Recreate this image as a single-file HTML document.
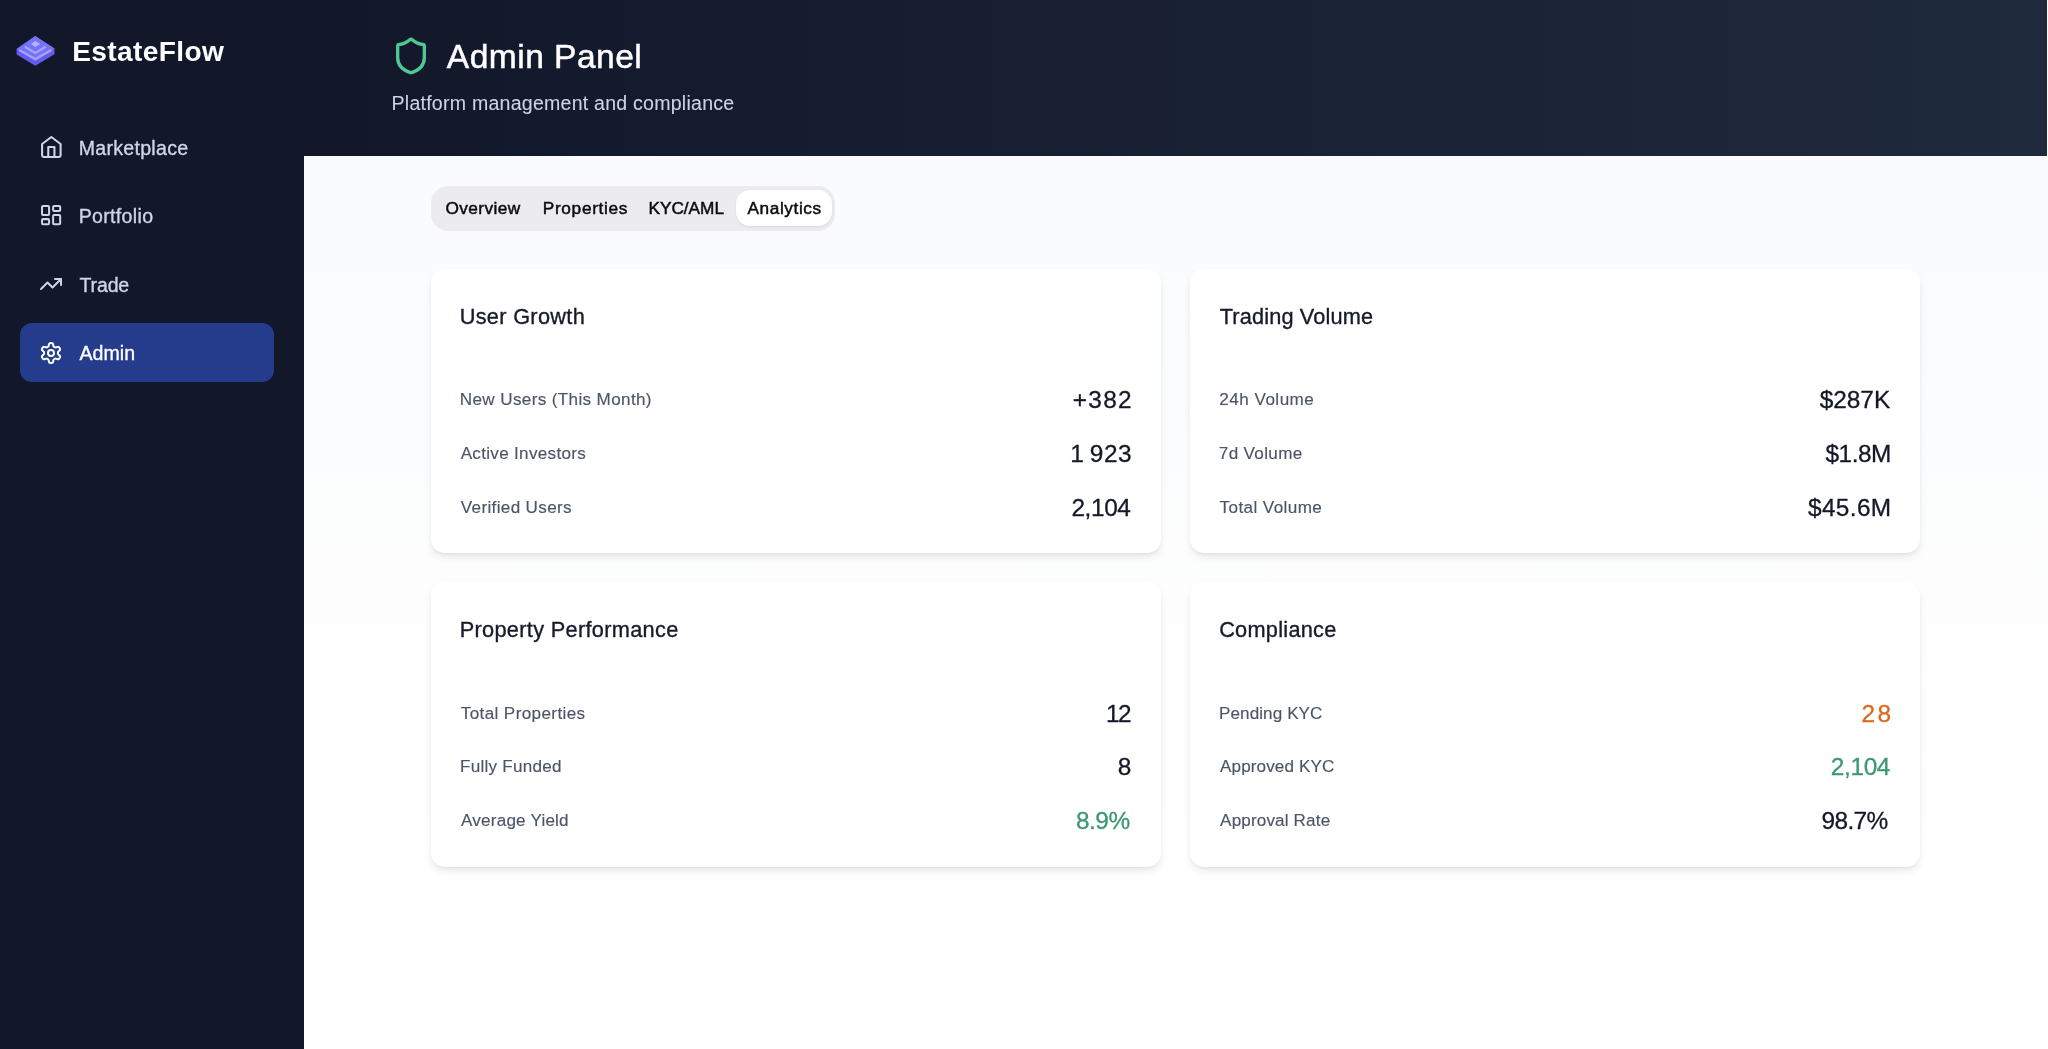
<!DOCTYPE html>
<html lang="en"><head><meta charset="utf-8"><title>EstateFlow Admin Panel</title>
<style>
html,body{margin:0;padding:0}
body{width:2048px;height:1049px;overflow:hidden;position:relative;background:#fff;font-family:"Liberation Sans", Arial, sans-serif;}
h1,h3,p,button{margin:0;padding:0;border:0;background:none;font:inherit;font-weight:400}
.t{position:absolute;line-height:1;white-space:pre;display:block}
.ic{position:absolute;color:#ced5e8;overflow:visible}
#bg div{position:absolute}
#ui{position:absolute;left:0;top:0;width:2048px;height:1049px;will-change:transform}
#side-bg{left:0;top:0;width:303.5px;height:1049px;background:#12172a}
#head-bg{left:303.5px;top:0;width:1743.5px;height:156.3px;background:linear-gradient(90deg,#12172a 0%,#1f2a3c 100%)}
#main-bg{left:303.5px;top:156px;width:1744.5px;height:893px;background:linear-gradient(180deg,#fafbfd 0px,#fbfcfd 250px,#fefefe 540px,#fff 680px)}
#nav-on{left:20.2px;top:323.1px;width:254.2px;height:59.4px;border-radius:12px;background:#243c8b}
#tabs-bg{left:431px;top:185.5px;width:404px;height:45px;border-radius:17px;background:#ececef}
#tab-on{left:735.6px;top:190px;width:96.4px;height:35.6px;border-radius:14px;background:#fff;box-shadow:0 1px 2.5px rgba(0,0,0,.07)}
.card{width:730.3px;height:284.4px;border-radius:14px;background:#fff;box-shadow:0 5px 8px -1.5px rgba(0,0,0,.085),0 2px 4.5px -2px rgba(0,0,0,.09)}
</style></head><body>
<div id="bg">
<div id="main-bg"></div>
<div id="side-bg"></div>
<div id="head-bg"></div>
<div id="nav-on"></div>
<div id="tabs-bg"></div>
<div id="tab-on"></div>
<div class="card" style="left:431px;top:268.8px"></div>
<div class="card" style="left:1189.7px;top:268.8px"></div>
<div class="card" style="left:431px;top:582.2px"></div>
<div class="card" style="left:1189.7px;top:582.2px"></div>
</div>
<div id="ui">
<aside>
<svg class="ic" style="left:14px;top:33px" width="44" height="36" viewBox="14 33 44 36">
<polygon points="16.6,48.9 35.2,36.1 54.5,48.4 54.5,54.2 35.3,65.8 16.6,54.6" fill="#655cec"/>
<polygon points="16.6,48.9 35.2,36.1 54.5,48.4 35.3,61.6" fill="#7672f5"/>
<polyline points="20.0,50.5 35.3,59.0 50.6,50.5" fill="none" stroke="#a3a4ff" stroke-width="2.3" stroke-linejoin="round" stroke-linecap="round"/>
<polyline points="25.6,47.3 35.3,53.0 45.0,47.3" fill="none" stroke="#a3a4ff" stroke-width="2.3" stroke-linejoin="round" stroke-linecap="round"/>
<polygon points="35.4,40.9 40.2,43.9 35.4,46.9 30.9,43.9" fill="#b3b4ff"/>
</svg>
<div class="t brand" style="left:72.20px;top:38.00px;font-size:28.12px;color:#ffffff;font-weight:700;letter-spacing:0.367px;">EstateFlow</div>
<nav>
<a class="nav"><svg class="ic" style="left:39.00px;top:134.55px" width="24.7" height="24.0" viewBox="0 0 24 24" preserveAspectRatio="none" fill="none" stroke="currentColor" stroke-width="2" stroke-linecap="round" stroke-linejoin="round"><path d="m3 9 9-7 9 7v11a2 2 0 0 1-2 2H5a2 2 0 0 1-2-2z"/><polyline points="9 22 9 12 15 12 15 22"/></svg><span class="t" style="left:78.67px;top:138.63px;font-size:19.57px;color:#ced5e8;letter-spacing:0.29px;-webkit-text-stroke:0.35px #ced5e8;">Marketplace</span></a>
<a class="nav"><svg class="ic" style="left:39.35px;top:203.10px" width="24.2" height="24.2" viewBox="0 0 24 24" fill="none" stroke="currentColor" stroke-width="2" stroke-linecap="round" stroke-linejoin="round"><rect width="7" height="9" x="3" y="3" rx="1"/><rect width="7" height="5" x="14" y="3" rx="1"/><rect width="7" height="9" x="14" y="12" rx="1"/><rect width="7" height="5" x="3" y="16" rx="1"/></svg><span class="t" style="left:78.67px;top:207.23px;font-size:19.57px;color:#ced5e8;letter-spacing:0.331px;-webkit-text-stroke:0.35px #ced5e8;">Portfolio</span></a>
<a class="nav"><svg class="ic" style="left:39.45px;top:271.90px" width="24.0" height="24.0" viewBox="0 0 24 24" fill="none" stroke="currentColor" stroke-width="2" stroke-linecap="round" stroke-linejoin="round"><polyline points="22 7 13.5 15.5 8.5 10.5 2 17"/><polyline points="16 7 22 7 22 13"/></svg><span class="t" style="left:79.58px;top:275.73px;font-size:19.57px;color:#ced5e8;letter-spacing:-0.188px;-webkit-text-stroke:0.35px #ced5e8;">Trade</span></a>
<a class="nav on"><svg class="ic" style="left:39.30px;top:340.50px;color:#fff" width="24.0" height="24.0" viewBox="0 0 24 24" fill="none" stroke="currentColor" stroke-width="2" stroke-linecap="round" stroke-linejoin="round"><path d="M12.22 2h-.44a2 2 0 0 0-2 2v.18a2 2 0 0 1-1 1.73l-.43.25a2 2 0 0 1-2 0l-.15-.08a2 2 0 0 0-2.73.73l-.22.38a2 2 0 0 0 .73 2.73l.15.1a2 2 0 0 1 1 1.72v.51a2 2 0 0 1-1 1.74l-.15.09a2 2 0 0 0-.73 2.73l.22.38a2 2 0 0 0 2.73.73l.15-.08a2 2 0 0 1 2 0l.43.25a2 2 0 0 1 1 1.73V20a2 2 0 0 0 2 2h.44a2 2 0 0 0 2-2v-.18a2 2 0 0 1 1-1.73l.43-.25a2 2 0 0 1 2 0l.15.08a2 2 0 0 0 2.73-.73l.22-.39a2 2 0 0 0-.73-2.73l-.15-.08a2 2 0 0 1-1-1.74v-.5a2 2 0 0 1 1-1.74l.15-.09a2 2 0 0 0 .73-2.73l-.22-.38a2 2 0 0 0-2.73-.73l-.15.08a2 2 0 0 1-2 0l-.43-.25a2 2 0 0 1-1-1.73V4a2 2 0 0 0-2-2z"/><circle cx="12" cy="12" r="3"/></svg><span class="t" style="left:79.38px;top:344.13px;font-size:19.57px;color:#ffffff;letter-spacing:0.05px;-webkit-text-stroke:0.35px #ffffff;">Admin</span></a>
</nav>
</aside>
<header>
<svg class="ic" style="left:391.30px;top:36.00px;color:#4ec995" width="40" height="40" viewBox="0 0 24 24" fill="none" stroke="currentColor" stroke-width="2" stroke-linecap="round" stroke-linejoin="round"><path d="M20 13c0 5-3.5 7.5-7.66 8.95a1 1 0 0 1-.67-.01C7.5 20.5 4 18 4 13V6a1 1 0 0 1 1-1c2 0 4.5-1.2 6.24-2.72a1.17 1.17 0 0 1 1.52 0C14.51 3.81 17 5 19 5a1 1 0 0 1 1 1z"/></svg>
<h1 class="t" style="left:446.85px;top:40.40px;font-size:33.55px;color:#ffffff;letter-spacing:0.47px;-webkit-text-stroke:0.5px #ffffff;">Admin Panel</h1>
<p class="t" style="left:391.55px;top:94.43px;font-size:19.57px;color:#cbd5e1;letter-spacing:0.233px;-webkit-text-stroke:0.1px #cbd5e1;">Platform management and compliance</p>
</header>
<main>
<div role="tablist">
<button class="t tab" style="left:445.39px;top:200.29px;font-size:17.26px;color:#0b0b10;letter-spacing:0.41px;-webkit-text-stroke:0.48px #0b0b10;">Overview</button>
<button class="t tab" style="left:542.74px;top:200.29px;font-size:17.26px;color:#0b0b10;letter-spacing:0.68px;-webkit-text-stroke:0.48px #0b0b10;">Properties</button>
<button class="t tab" style="left:648.49px;top:200.29px;font-size:17.26px;color:#0b0b10;letter-spacing:-0.038px;-webkit-text-stroke:0.48px #0b0b10;">KYC/AML</button>
<button class="t tab" style="left:747.49px;top:200.29px;font-size:17.26px;color:#0b0b10;letter-spacing:0.578px;-webkit-text-stroke:0.48px #0b0b10;">Analytics</button>
</div>
<section class="cardc">
<h3 class="t title" style="left:459.68px;top:306.01px;font-size:21.73px;color:#161a2b;letter-spacing:0.315px;-webkit-text-stroke:0.35px #161a2b;">User Growth</h3>
<div class="row"><span class="t lab" style="left:459.82px;top:391.22px;font-size:17.1px;color:#4b5567;letter-spacing:0.355px;-webkit-text-stroke:0.15px #4b5567;">New Users (This Month)</span><span class="t val" style="left:1072.65px;top:388.24px;font-size:24.41px;color:#141827;letter-spacing:1.35px;-webkit-text-stroke:0.3px #141827;">+382</span></div>
<div class="row"><span class="t lab" style="left:460.68px;top:445.07px;font-size:17.1px;color:#4b5567;letter-spacing:0.3px;-webkit-text-stroke:0.15px #4b5567;">Active Investors</span><span class="t val" style="left:1070.30px;top:442.04px;font-size:24.41px;color:#141827;letter-spacing:0.537px;-webkit-text-stroke:0.3px #141827;">1 923</span></div>
<div class="row"><span class="t lab" style="left:460.82px;top:499.02px;font-size:17.1px;color:#4b5567;letter-spacing:0.335px;-webkit-text-stroke:0.15px #4b5567;">Verified Users</span><span class="t val" style="left:1071.40px;top:495.84px;font-size:24.41px;color:#141827;letter-spacing:-0.387px;-webkit-text-stroke:0.3px #141827;">2,104</span></div>
</section>
<section class="cardc">
<h3 class="t title" style="left:1219.67px;top:306.01px;font-size:21.73px;color:#161a2b;letter-spacing:0.165px;-webkit-text-stroke:0.35px #161a2b;">Trading Volume</h3>
<div class="row"><span class="t lab" style="left:1219.33px;top:391.22px;font-size:17.1px;color:#4b5567;letter-spacing:0.467px;-webkit-text-stroke:0.15px #4b5567;">24h Volume</span><span class="t val" style="left:1819.65px;top:388.24px;font-size:24.41px;color:#141827;letter-spacing:-0.012px;-webkit-text-stroke:0.3px #141827;">$287K</span></div>
<div class="row"><span class="t lab" style="left:1218.83px;top:445.07px;font-size:17.1px;color:#4b5567;letter-spacing:0.325px;-webkit-text-stroke:0.15px #4b5567;">7d Volume</span><span class="t val" style="left:1825.50px;top:442.04px;font-size:24.41px;color:#141827;letter-spacing:-0.5px;-webkit-text-stroke:0.3px #141827;">$1.8M</span></div>
<div class="row"><span class="t lab" style="left:1219.58px;top:499.02px;font-size:17.1px;color:#4b5567;letter-spacing:0.395px;-webkit-text-stroke:0.15px #4b5567;">Total Volume</span><span class="t val" style="left:1808.00px;top:495.84px;font-size:24.41px;color:#141827;letter-spacing:0.35px;-webkit-text-stroke:0.3px #141827;">$45.6M</span></div>
</section>
<section class="cardc">
<h3 class="t title" style="left:459.68px;top:619.41px;font-size:21.73px;color:#161a2b;letter-spacing:0.324px;-webkit-text-stroke:0.35px #161a2b;">Property Performance</h3>
<div class="row"><span class="t lab" style="left:460.82px;top:704.62px;font-size:17.1px;color:#4b5567;letter-spacing:0.367px;-webkit-text-stroke:0.15px #4b5567;">Total Properties</span><span class="t val" style="left:1105.90px;top:701.64px;font-size:24.41px;color:#141827;letter-spacing:-1.45px;-webkit-text-stroke:0.3px #141827;">12</span></div>
<div class="row"><span class="t lab" style="left:459.97px;top:758.47px;font-size:17.1px;color:#4b5567;letter-spacing:0.255px;-webkit-text-stroke:0.15px #4b5567;">Fully Funded</span><span class="t val" style="left:1117.80px;top:755.44px;font-size:24.41px;color:#141827;-webkit-text-stroke:0.3px #141827;">8</span></div>
<div class="row"><span class="t lab" style="left:461.07px;top:812.42px;font-size:17.1px;color:#4b5567;letter-spacing:0.196px;-webkit-text-stroke:0.15px #4b5567;">Average Yield</span><span class="t val" style="left:1076.05px;top:809.24px;font-size:24.41px;color:#3c9870;letter-spacing:-0.517px;-webkit-text-stroke:0.3px #3c9870;">8.9%</span></div>
</section>
<section class="cardc">
<h3 class="t title" style="left:1219.17px;top:619.41px;font-size:21.73px;color:#161a2b;letter-spacing:0.278px;-webkit-text-stroke:0.35px #161a2b;">Compliance</h3>
<div class="row"><span class="t lab" style="left:1218.98px;top:704.62px;font-size:17.1px;color:#4b5567;letter-spacing:0.085px;-webkit-text-stroke:0.15px #4b5567;">Pending KYC</span><span class="t val" style="left:1861.40px;top:701.64px;font-size:24.41px;color:#d96a1c;letter-spacing:2.45px;-webkit-text-stroke:0.3px #d96a1c;">28</span></div>
<div class="row"><span class="t lab" style="left:1220.08px;top:758.47px;font-size:17.1px;color:#4b5567;letter-spacing:0.1px;-webkit-text-stroke:0.15px #4b5567;">Approved KYC</span><span class="t val" style="left:1830.80px;top:755.44px;font-size:24.41px;color:#3c9870;letter-spacing:-0.363px;-webkit-text-stroke:0.3px #3c9870;">2,104</span></div>
<div class="row"><span class="t lab" style="left:1220.08px;top:812.42px;font-size:17.1px;color:#4b5567;letter-spacing:0.146px;-webkit-text-stroke:0.15px #4b5567;">Approval Rate</span><span class="t val" style="left:1821.40px;top:809.24px;font-size:24.41px;color:#141827;letter-spacing:-0.575px;-webkit-text-stroke:0.3px #141827;">98.7%</span></div>
</section>
</main>
</div>
</body></html>
